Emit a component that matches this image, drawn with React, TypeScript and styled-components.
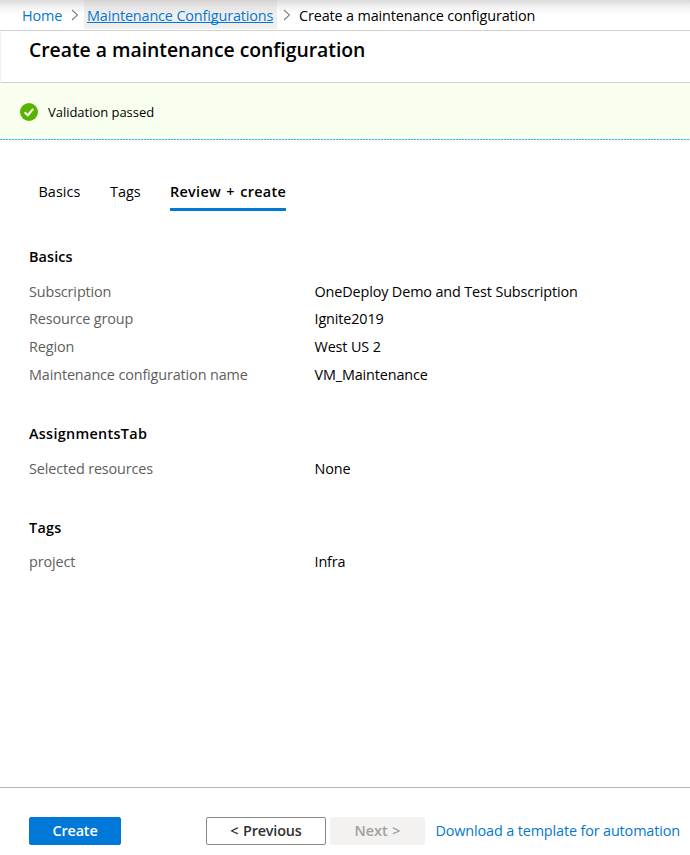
import React from "react";
import styled, { createGlobalStyle, css } from "styled-components";

const GlobalStyle = createGlobalStyle`
  * { box-sizing: border-box; }
  body {
    margin: 0;
    background: #fff;
    color: #000;
    font-family: "Open Sans", "Noto Sans", sans-serif;
    font-size: 14.4px;
    line-height: 20px;
  }
`;

const Page = styled.div`
  width: 690px;
  height: 855px;
  display: flex;
  flex-direction: column;
  overflow: hidden;
`;

const Label = styled.span<{ $track?: number; $word?: number }>`
  white-space: nowrap;
  letter-spacing: ${(p) => p.$track ?? -0.13}px;
  word-spacing: ${(p) => p.$word ?? 0}px;
`;

const Breadcrumb = styled.nav`
  height: 31px;
  flex: none;
  display: flex;
  align-items: stretch;
  padding-left: 22px;
  border-bottom: 1px solid #d2d0ce;
  background: linear-gradient(to bottom, #d9d9d9 0, #f0f0f0 6px, #fff 14px);
`;

const crumb = css`
  display: flex;
  align-items: center;
  padding-top: 1px;
`;

const HomeCrumb = styled.a`
  ${crumb}
  width: 40px;
  color: #0078d4;
`;

const ActiveCrumb = styled.a`
  ${crumb}
  width: 193px;
  padding-top: 2px;
  padding-left: 3px;
  margin-bottom: 1px;
  color: #0078d4;
  background: linear-gradient(to bottom, #d4d3d2 0, #e6e5e4 7px, #f0efee 14px);
  text-decoration: underline;
  text-decoration-thickness: 1px;
  text-decoration-skip-ink: none;
  text-underline-offset: 1px;
`;

const CurrentCrumb = styled.span`
  ${crumb}
`;

const Chevron = styled.svg<{ $left: number; $right: number }>`
  width: 8px;
  height: 12px;
  flex: none;
  align-self: center;
  margin: 0 ${(p) => p.$right}px 0 ${(p) => p.$left}px;
  fill: none;
  stroke: #808080;
  stroke-width: 1.1;
`;

const TitleBar = styled.header`
  height: 52px;
  flex: none;
  padding: 6px 0 0 28px;
  border-left: 1px solid #f0f0f0;
  border-bottom: 1px solid #d2d0ce;
`;

const Title = styled.h1`
  margin: 0;
  font-size: 19.4px;
  line-height: 26px;
  font-weight: 600;
`;

const Banner = styled.div`
  height: 57px;
  flex: none;
  display: flex;
  align-items: center;
  gap: 10px;
  padding: 0 0 0 20px;
  background:
    repeating-linear-gradient(to right, #2fb4dc 0 2px, #c4eef5 2px 3px) left bottom / 100% 1px no-repeat,
    #f8ffef;
  font-size: 13px;
`;

const StatusIcon = styled.svg`
  width: 18px;
  height: 18px;
  flex: none;
`;

const Tabs = styled.div`
  display: flex;
  height: 71px;
  flex: none;
  padding: 42px 0 0 38.5px;
`;

const Tab = styled.div<{ $width: number; $gap?: number; $active?: boolean }>`
  height: 29px;
  width: ${(p) => p.$width}px;
  margin-right: ${(p) => p.$gap ?? 0}px;
  font-weight: ${(p) => (p.$active ? 600 : 400)};
  border-bottom: 3px solid ${(p) => (p.$active ? "#0078d4" : "transparent")};
`;

const Content = styled.main`
  flex: 1;
  padding: 36px 29px 0;
`;

const Section = styled.section`
  margin-bottom: 35.5px;
`;

const SectionTitle = styled.h2<{ $gap: number }>`
  margin: 0 0 ${(p) => p.$gap}px;
  font-size: 14.4px;
  line-height: 20px;
  font-weight: 600;
`;

const Row = styled.div`
  display: grid;
  grid-template-columns: 285.5px 1fr;
  height: 27.6px;
  align-items: center;
`;

const Key = styled(Label)`
  color: #605e5c;
`;

const Footer = styled.footer`
  height: 68px;
  flex: none;
  display: flex;
  align-items: flex-start;
  padding: 29px 0 0 29px;
  border-top: 1px solid #b5b5b5;
`;

const Button = styled.button<{ $width: number; $gap: number; $kind: "primary" | "default" | "disabled" }>`
  width: ${(p) => p.$width}px;
  height: 28px;
  margin: 0 ${(p) => p.$gap}px 0 0;
  padding: 0;
  flex: none;
  border-radius: 2px;
  font: inherit;
  font-weight: 600;
  line-height: 26px;
  ${(p) =>
    p.$kind === "primary"
      ? "color:#fff;background:#0078d7;border:1px solid #0078d7;"
      : p.$kind === "default"
      ? "color:#323130;background:#fff;border:1px solid #8a8886;"
      : "color:#a19f9d;background:#f3f2f1;border:1px solid #f3f2f1;"}
`;

const DownloadLink = styled.a`
  line-height: 28px;
  color: #0078d4;
`;

type Item = { name: string; value: string };

const sections: { title: string; track: number; gap: number; items: Item[] }[] = [
  {
    title: "Basics",
    track: 0.12,
    gap: 11,
    items: [
      { name: "Subscription", value: "OneDeploy Demo and Test Subscription" },
      { name: "Resource group", value: "Ignite2019" },
      { name: "Region", value: "West US 2" },
      { name: "Maintenance configuration name", value: "VM_Maintenance" },
    ],
  },
  { title: "AssignmentsTab", track: 0.3, gap: 11, items: [{ name: "Selected resources", value: "None" }] },
  { title: "Tags", track: 0.25, gap: 10, items: [{ name: "project", value: "Infra" }] },
];

const Separator = ({ left, right }: { left: number; right: number }) => (
  <Chevron $left={left} $right={right} viewBox="0 0 8 12">
    <path d="M1 1 L6.5 6 L1 11" />
  </Chevron>
);

export default function App() {
  return (
    <>
      <GlobalStyle />
      <Page>
        <Breadcrumb>
          <HomeCrumb><Label>Home</Label></HomeCrumb>
          <Separator left={9} right={5} />
          <ActiveCrumb><Label>Maintenance Configurations</Label></ActiveCrumb>
          <Separator left={6} right={8} />
          <CurrentCrumb><Label>Create a maintenance configuration</Label></CurrentCrumb>
        </Breadcrumb>
        <TitleBar>
          <Title><Label $track={-0.03}>Create a maintenance configuration</Label></Title>
        </TitleBar>
        <Banner>
          <StatusIcon viewBox="0 0 18 18">
            <circle cx="9" cy="9" r="9" fill="#57b300" />
            <path d="M4.7 9.2 L7.8 12.2 L13.2 5.8" fill="none" stroke="#fff" strokeWidth="2" />
          </StatusIcon>
          <Label $track={-0.03}>Validation passed</Label>
        </Banner>
        <Tabs>
          <Tab $width={42.5} $gap={29}><Label $track={0.05}>Basics</Label></Tab>
          <Tab $width={31} $gap={29}><Label $track={0}>Tags</Label></Tab>
          <Tab $width={116} $active><Label $track={0.3} $word={1.3}>Review + create</Label></Tab>
        </Tabs>
        <Content>
          {sections.map((s) => (
            <Section key={s.title}>
              <SectionTitle $gap={s.gap}><Label $track={s.track}>{s.title}</Label></SectionTitle>
              {s.items.map((i) => (
                <Row key={i.name}>
                  <Key>{i.name}</Key>
                  <Label>{i.value}</Label>
                </Row>
              ))}
            </Section>
          ))}
        </Content>
        <Footer>
          <Button $kind="primary" $width={92} $gap={85}><Label $track={-0.15}>Create</Label></Button>
          <Button $kind="default" $width={120} $gap={4}><Label $track={-0.15} $word={1}>&lt; Previous</Label></Button>
          <Button $kind="disabled" $width={95} $gap={10.5}><Label $track={-0.05} $word={1}>Next &gt;</Label></Button>
          <DownloadLink><Label>Download a template for automation</Label></DownloadLink>
        </Footer>
      </Page>
    </>
  );
}
